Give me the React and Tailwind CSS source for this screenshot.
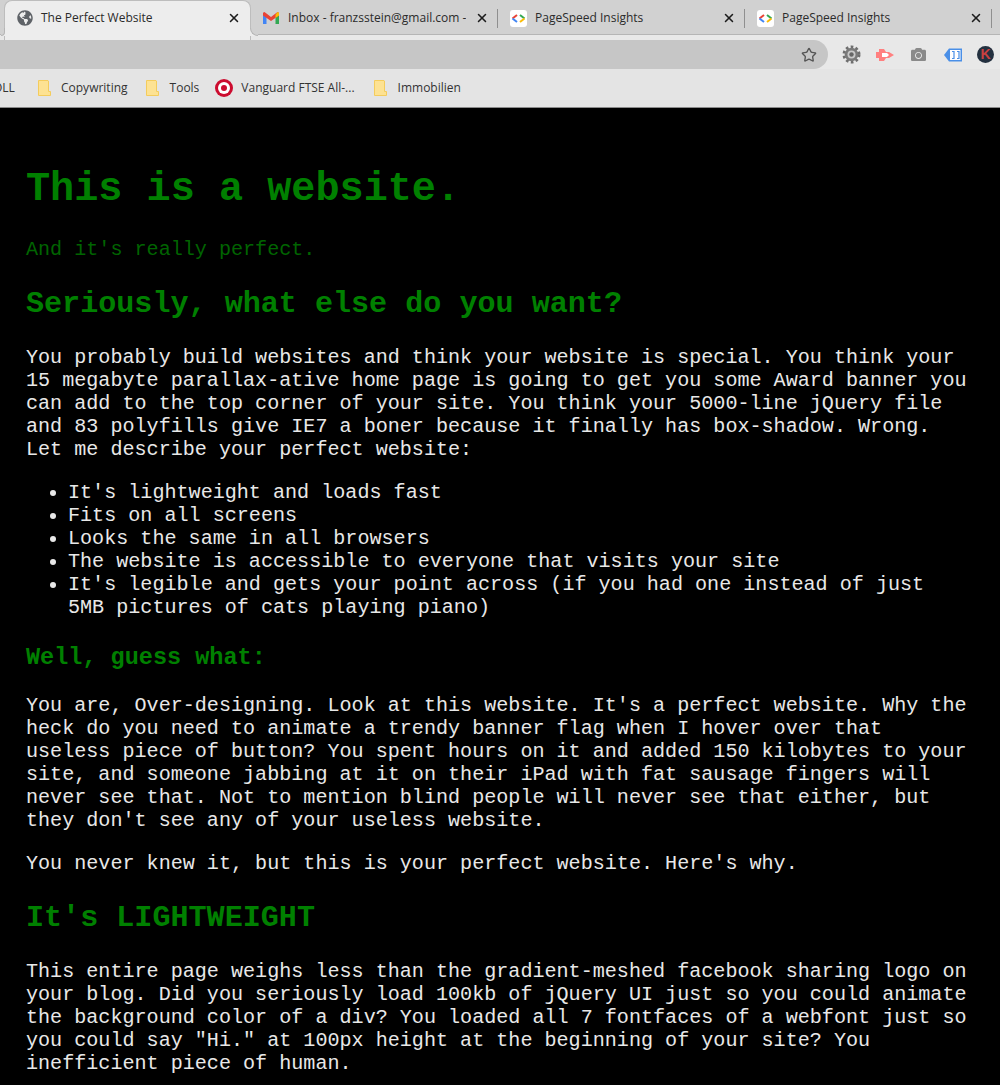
import React from "react";
import { Star, X } from "lucide-react";
import { FaGlobeAmericas, FaCamera } from "react-icons/fa";

const uiFont = "[font-family:'Open_Sans','Noto_Sans',sans-serif]";

function Gmail() {
  return (
    <svg width="16" height="12" viewBox="0 0 16 12" className="shrink-0">
      <rect x="0" y="2" width="3.5" height="10" fill="#4285f4" />
      <rect x="12.500" y="2" width="3.500" height="10" fill="#34a853" />
      <polygon points="0,0.8 1.500,0 8,5 14.500,0 16,0.8 16,3.500 8,9 0,3.500" fill="#ea4335" />
      <polygon points="12.500,2.700 14.500,0 16,0.8 16,3.500 12.500,5.900" fill="#fbbc04" />
    </svg>
  );
}

function PageSpeed() {
  return (
    <span className="w-[17px] h-[17px] shrink-0 bg-white rounded-[3px] flex items-center justify-center">
      <svg width="15" height="9" viewBox="0 0 15 9">
        <path d="M6 1 1.500 4.500" stroke="#ea4335" strokeWidth="2" fill="none" />
        <path d="M1.500 4.500 6 8" stroke="#4285f4" strokeWidth="2" fill="none" />
        <path d="M9 1l4.500 3.500" stroke="#34a853" strokeWidth="2" fill="none" />
        <path d="M13.500 4.500 9 8" stroke="#fbbc05" strokeWidth="2" fill="none" />
      </svg>
    </span>
  );
}

function Folder() {
  return (
    <svg width="13" height="16" viewBox="0 0 13 16" className="shrink-0">
      <path d="M.5.500h9.500l.5.500v10.500h2v4h-12z" fill="#fde293" stroke="#f4cc5c" />
    </svg>
  );
}

function Target() {
  return (
    <svg width="18" height="18" viewBox="0 0 18 18" className="shrink-0">
      <circle cx="9" cy="9" r="9" fill="#cc0c2f" />
      <circle cx="9" cy="9" r="6" fill="#fff" />
      <circle cx="9" cy="9" r="3" fill="#cc0c2f" />
    </svg>
  );
}

function Gear() {
  return (
    <svg width="19" height="19" viewBox="0 0 19 19" className="shrink-0">
      <circle cx="9.500" cy="9.500" r="7.500" fill="none" stroke="#6e6e6e" strokeWidth="3" strokeDasharray="2.600 2.300" />
      <circle cx="9.500" cy="9.500" r="6.800" fill="#7a7a7a" />
      <circle cx="9.500" cy="9.500" r="4" fill="#c9c9c9" />
      <circle cx="9.500" cy="9.500" r="2.200" fill="#666" />
    </svg>
  );
}

function Tag() {
  return (
    <svg width="18" height="14" viewBox="0 0 18 14" className="ml-[18px] shrink-0">
      <path d="M5 0.500h13v13H5L0 7z" fill="#4a8fe7" />
      <rect x="6" y="2" width="10.500" height="10" fill="#fff" />
      <path d="M8 3.500h2v7H8M13 3.500h2v7h-2" fill="none" stroke="#4a8fe7" strokeWidth="1.200" />
    </svg>
  );
}

function Tab({ icon, title, sep, gap = "gap-[8px]" }) {
  return (
    <div className={`relative w-[247px] h-[35px] pt-[1px] pl-[12px] pr-[9px] flex items-center shrink-0 ${gap}`}>
      {icon}
      <span className={`flex-1 whitespace-nowrap overflow-hidden text-[12px] text-[#2b2b2b] ${uiFont}`}>{title}</span>
      <X size={14} strokeWidth={2.6} className="shrink-0 text-[#1c1c1c]" />
      {sep && <span className="absolute right-0 top-[9px] h-[19px] w-[1px] bg-[#8f8f8f]" />}
    </div>
  );
}

function ActiveTab() {
  return (
    <div className="relative z-10 w-[247px] h-[40px] -mb-[5px] pb-[6px] pl-[12px] pr-[9px] flex items-center gap-[8px] shrink-0 bg-[#ededed] rounded-t-[8px] border-x border-t border-[#bdbdbd]">
      <FaGlobeAmericas size={16} className="shrink-0 text-[#5f6368]" />
      <span className={`flex-1 whitespace-nowrap text-[12px] text-[#2b2b2b] ${uiFont}`}>The Perfect Website</span>
      <X size={14} strokeWidth={2.6} className="shrink-0 text-[#1c1c1c]" />
      <span className="absolute left-full bottom-[4px] w-[8px] h-[8px] bg-[#ededed]">
        <span className="block w-full h-full bg-[#d1d1d1] rounded-bl-[8px] border-l border-b border-[#b5b5b5]" />
      </span>
      <span className="absolute right-full bottom-[4px] w-[4px] h-[8px] bg-[#ededed]">
        <span className="block w-full h-full bg-[#d1d1d1] rounded-br-[4px] border-r border-b border-[#b5b5b5]" />
      </span>
    </div>
  );
}

function Bookmark({ icon, label, gap }) {
  return (
    <div className={`flex items-center ${gap}`}>
      {icon}
      <span className={`whitespace-nowrap text-[12px] text-[#333] ${uiFont}`}>{label}</span>
    </div>
  );
}

export default function App() {
  return (
    <div className="w-[1000px] h-[1085px] overflow-hidden bg-black">
      <div className="bg-[#e4e4e4] h-[108px] border-b border-[#8a8a8a]">
        <div className="h-[35px] bg-[#d1d1d1] flex items-start pl-[4px] border-b-[1px] border-[#b5b5b5]">
          <ActiveTab />
          <Tab sep icon={<Gmail />} title="Inbox - franzsstein@gmail.com -" gap="gap-[9px]" />
          <Tab sep icon={<PageSpeed />} title="PageSpeed Insights" />
          <Tab sep icon={<PageSpeed />} title="PageSpeed Insights" />
        </div>
        <div className="h-[34px] pt-[5px] flex items-start bg-[#e8e8e8]">
          <div className="w-[828px] h-[29px] bg-[#c6c6c6] rounded-r-[15px] flex items-center justify-end pr-[11px]">
            <Star size={16} strokeWidth={2} className="text-[#555]" />
          </div>
          <div className="h-[29px] flex items-center pl-[14px]">
            <Gear />
            <svg width="18" height="14" viewBox="0 0 18 14" className="ml-[15px] shrink-0">
              <path d="M0 4h3V1h5l2 3h3l5 3-5 3h-3l-2 3H3v-3H0z" fill="#ff8080" />
              <path d="M6 5h5l2 2-2 2H6z" fill="#fff" />
            </svg>
            <FaCamera size={15} className="ml-[17px] text-[#8a8a8a]" />
            <Tag />
            <span className="ml-[15px] w-[17px] h-[17px] rounded-full bg-[#23303f] flex items-center justify-center text-[14px] font-bold text-[#c94040] [font-family:'Liberation_Sans',sans-serif]">
              K
            </span>
          </div>
        </div>
        <div className="h-[38px] flex items-center text-[12px] bg-[#e4e4e4] overflow-hidden">
          <span className={`w-[45px] -ml-[7px] shrink-0 text-[12px] text-[#333] ${uiFont}`}>OLL</span>
          <Bookmark icon={<Folder />} label="Copywriting" gap="gap-[10px] mr-[18px]" />
          <Bookmark icon={<Folder />} label="Tools" gap="gap-[11px] mr-[16px]" />
          <Bookmark icon={<Target />} label="Vanguard FTSE All-..." gap="gap-[8px] mr-[19px]" />
          <Bookmark icon={<Folder />} label="Immobilien" gap="gap-[11px]" />
        </div>
      </div>

      <main className="pl-[26px] pr-[31px] pt-[59px] text-[#e8e8e8] text-[20.1px] leading-[23px] [font-family:'Liberation_Mono','Courier_New',monospace]">
        <h1 className="text-[40.2px] leading-[45px] font-bold text-[#008000]">This is a website.</h1>
        <p className="text-[#006400] mt-[26px]">And it's really perfect.</p>
        <h2 className="text-[30.1px] leading-[34px] font-bold text-[#008000] mt-[26px]">Seriously, what else do you want?</h2>
        <p className="mt-[25px]">
          You probably build websites and think your website is special. You think your 15 megabyte parallax-ative home page is going to get you some Award banner you can add to the top corner of your site. You think your 5000-line jQuery file and 83 polyfills give IE7 a boner because it finally has box-shadow. Wrong. Let me describe your perfect website:
        </p>
        <ul className="list-disc pl-[42px] mt-[20px]">
          <li>It's lightweight and loads fast</li>
          <li>Fits on all screens</li>
          <li>Looks the same in all browsers</li>
          <li>The website is accessible to everyone that visits your site</li>
          <li>It's legible and gets your point across (if you had one instead of just 5MB pictures of cats playing piano)</li>
        </ul>
        <h3 className="text-[23.5px] leading-[27px] font-bold text-[#008000] mt-[25px]">Well, guess what:</h3>
        <p className="mt-[23px]">
          You are, Over-designing. Look at this website. It's a perfect website. Why the heck do you need to animate a trendy banner flag when I hover over that useless piece of button? You spent hours on it and added 150 kilobytes to your site, and someone jabbing at it on their iPad with fat sausage fingers will never see that. Not to mention blind people will never see that either, but they don't see any of your useless website.
        </p>
        <p className="mt-[20px]">You never knew it, but this is your perfect website. Here's why.</p>
        <h2 className="text-[30.1px] leading-[34px] font-bold text-[#008000] mt-[26px]">It's LIGHTWEIGHT</h2>
        <p className="mt-[25px]">
          This entire page weighs less than the gradient-meshed facebook sharing logo on your blog. Did you seriously load 100kb of jQuery UI just so you could animate the background color of a div? You loaded all 7 fontfaces of a webfont just so you could say "Hi." at 100px height at the beginning of your site? You inefficient piece of human.
        </p>
      </main>
    </div>
  );
}
